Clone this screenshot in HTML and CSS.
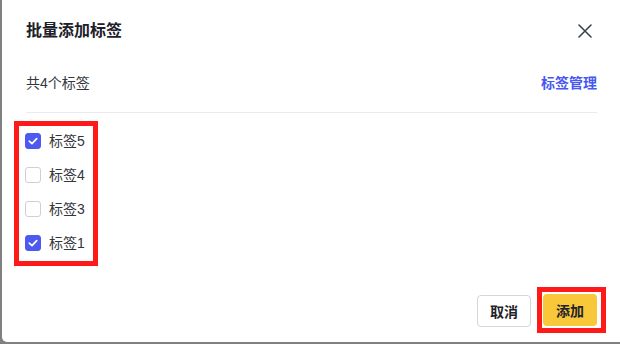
FILE: index.html
```html
<!DOCTYPE html>
<html lang="zh-CN">
<head>
<meta charset="utf-8">
<link rel="stylesheet" href="styles.css">
</head>
<body>
<div class="dialog">
  <div class="header">
    <div class="title">批量添加标签</div>
    <svg class="close" width="14" height="14" viewBox="0 0 14 14"><path d="M1 1L13 13M13 1L1 13" stroke="#3d4450" stroke-width="1.6" stroke-linecap="round"/></svg>
  </div>
  <div class="info">
    <span class="count">共4个标签</span>
    <span class="manage">标签管理</span>
  </div>
  <div class="divider"></div>
  <div class="list-mark">
    <div class="row"><span class="cb checked"><svg width="16" height="16" viewBox="0 0 16 16"><path d="M4.3 8.2L7 10.7L11.7 5.6" fill="none" stroke="#fff" stroke-width="1.7" stroke-linecap="round" stroke-linejoin="round"/></svg></span><span class="label">标签5</span></div>
    <div class="row"><span class="cb"></span><span class="label">标签4</span></div>
    <div class="row"><span class="cb"></span><span class="label">标签3</span></div>
    <div class="row"><span class="cb checked"><svg width="16" height="16" viewBox="0 0 16 16"><path d="M4.3 8.2L7 10.7L11.7 5.6" fill="none" stroke="#fff" stroke-width="1.7" stroke-linecap="round" stroke-linejoin="round"/></svg></span><span class="label">标签1</span></div>
  </div>
  <div class="footer">
    <button class="btn cancel">取消</button>
    <div class="btn-mark"><button class="btn primary">添加</button></div>
  </div>
</div>
</body>
</html>
```
FILE: styles.css
```css
html, body {
  margin: 0;
  padding: 0;
  overflow: hidden;
}
body {
  width: 620px;
  height: 344px;
  background: #808080;
  font-family: "Liberation Sans", "Noto Sans CJK SC", sans-serif;
  padding-left: 2px;
  box-sizing: border-box;
}
.dialog {
  width: 640px;
  height: 342px;
  background: #fff;
  border-radius: 0 0 0 5px;
  padding: 0 0 0 24px;
  box-sizing: border-box;
  display: flex;
  flex-direction: column;
}
.header {
  width: 571px;
  height: 62px;
  display: flex;
  align-items: center;
  justify-content: space-between;
}
.title {
  font-size: 16px;
  font-weight: 700;
  color: #1d2129;
  line-height: 24px;
}
.close {
  margin-right: 5px;
  margin-top: -1px;
}
.info {
  width: 571px;
  height: 24px;
  margin-top: 9px;
  display: flex;
  align-items: center;
  justify-content: space-between;
  font-size: 14px;
  line-height: 24px;
}
.count {
  color: #33363b;
}
.manage {
  color: #4757f2;
  font-weight: 700;
}
.divider {
  width: 571px;
  height: 1px;
  background: #e8eaef;
  margin-top: 17px;
}
.list-mark {
  width: 84px;
  box-sizing: border-box;
  border: 5px solid #ff1a1a;
  margin-left: -12px;
  margin-top: 8px;
  padding: 3px 0 6px 6px;
  display: flex;
  flex-direction: column;
  gap: 10px;
}
.row {
  height: 24px;
  display: flex;
  align-items: center;
  gap: 8px;
}
.cb {
  width: 16px;
  height: 16px;
  box-sizing: border-box;
  border: 1px solid #ccd0d8;
  border-radius: 3px;
  background: #fff;
  display: flex;
}
.cb.checked {
  background: #4c5af2;
  border-color: #4c5af2;
}
.cb.checked svg {
  margin: -1px;
}
.label {
  font-size: 14px;
  color: #33363b;
  line-height: 24px;
}
.footer {
  width: 571px;
  margin-top: 21px;
  display: flex;
  justify-content: flex-end;
  align-items: center;
  gap: 6px;
}
.btn {
  height: 32px;
  border-radius: 4px;
  font-family: inherit;
  font-size: 14px;
  font-weight: 700;
  padding: 0;
  box-sizing: border-box;
  color: #1f2329;
  cursor: pointer;
}
.cancel {
  width: 54px;
  background: #fff;
  border: 1px solid #d3d6dc;
  margin-top: 1px;
}
.btn-mark {
  border: 5px solid #ff1a1a;
  padding: 2px 4px 2px 1px;
  margin-right: -9px;
  display: flex;
}
.primary {
  width: 54px;
  background: #f8c73a;
  border: none;
}
```
